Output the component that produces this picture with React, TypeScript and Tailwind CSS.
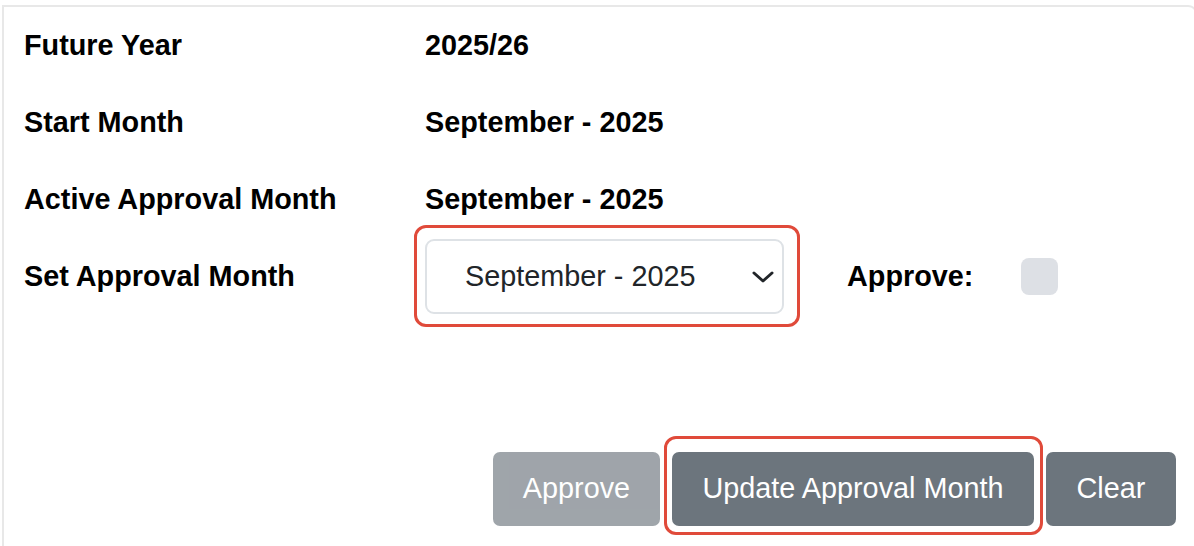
import { useState } from "react";

const rows = [
  { label: "Future Year", value: "2025/26" },
  { label: "Start Month", value: "September - 2025" },
  { label: "Active Approval Month", value: "September - 2025" },
];

export default function App() {
  const [month, setMonth] = useState("September - 2025");
  const [approved, setApproved] = useState(false);

  return (
    <div
      className="h-[546px] overflow-hidden bg-white pt-[5px] pl-[2px] text-black"
      style={{ fontFamily: '"Liberation Sans", Arial, sans-serif' }}
    >
      <div className="w-[1196px] h-[600px] border-2 border-b-0 border-[#e8e8e8] rounded-tr-[10px] pl-[20px]">
        {/* info rows */}
        {rows.map((r) => (
          <div key={r.label} className="flex items-center h-[77px] text-[28.8px] font-bold">
            <div className="w-[401px]">{r.label}</div>
            <div>{r.value}</div>
          </div>
        ))}

        {/* set approval month */}
        <div className="flex items-center h-[77px] text-[28.8px]">
          <div className="w-[401px] font-bold">Set Approval Month</div>
          <div className="relative">
            <span className="absolute -left-[11px] -right-[16px] -top-[14px] -bottom-[13px] border-[3px] border-[#e04a3a] rounded-[12px] pointer-events-none" />
            <select
              value={month}
              onChange={(e) => setMonth(e.target.value)}
              className="appearance-none w-[359px] h-[75px] border-2 border-[#dee2e6] rounded-[9px] bg-white pl-[38px] text-[28.8px] text-[#212529] outline-none"
            >
              <option>August - 2025</option>
              <option>September - 2025</option>
              <option>October - 2025</option>
            </select>
            <svg
              className="absolute right-[9px] top-1/2 -translate-y-1/2 w-[24px] h-[24px] pointer-events-none"
              viewBox="0 0 24 24"
              fill="none"
              stroke="#212529"
              strokeWidth="3"
              strokeLinecap="round"
              strokeLinejoin="round"
            >
              <path d="M3 8l9 8 9-8" />
            </svg>
          </div>
          <div className="ml-[63px] w-[174px] font-bold">Approve:</div>
          <button
            onClick={() => setApproved(!approved)}
            className={
              approved
                ? "w-[37px] h-[37px] rounded-[8px] bg-[#6c757d]"
                : "w-[37px] h-[37px] rounded-[8px] bg-[#dde0e5]"
            }
          />
        </div>

        {/* actions */}
        <div className="flex justify-end gap-[12px] mt-[137px] pr-[20px] text-[28.8px] text-white">
          <button className="w-[167px] h-[74px] rounded-[7px] bg-[#6c757d] opacity-65">Approve</button>
          <div className="relative">
            <span className="absolute -left-[8px] -right-[9px] -top-[16px] -bottom-[9px] border-[3px] border-[#e04a3a] rounded-[12px] pointer-events-none" />
            <button className="w-[362px] h-[74px] rounded-[7px] bg-[#6c757d]">Update Approval Month</button>
          </div>
          <button className="w-[130px] h-[74px] rounded-[7px] bg-[#6c757d]">Clear</button>
        </div>
      </div>
    </div>
  );
}
